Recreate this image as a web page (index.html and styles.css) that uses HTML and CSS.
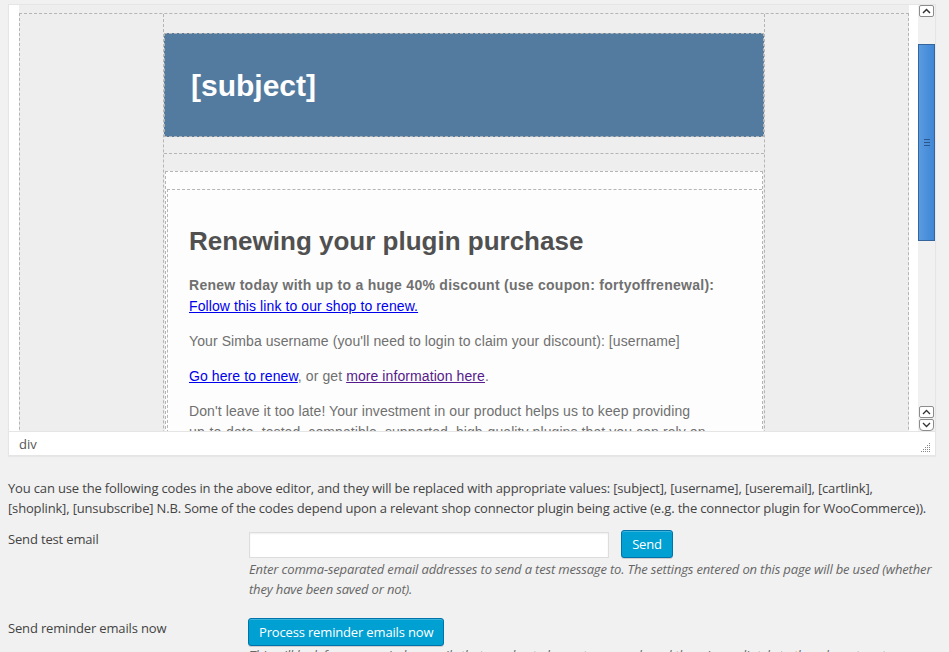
FILE: index.html
```html
<!DOCTYPE html>
<html>
<head>
<meta charset="utf-8">
<link rel="stylesheet" href="styles.css">
</head>
<body>
<div class="editor">
  <div class="edit-area">
    <div class="doc">
      <div class="canvas">
        <div class="outer-table">
          <div class="center-col">
            <div class="header-wrap">
              <div class="header">[subject]</div>
            </div>
            <div class="content-box">
              <div class="content-inner">
                <h1 class="title">Renewing your plugin purchase</h1>
                <p class="para"><strong class="strong">Renew today with up to a huge 40% discount (use coupon: fortyoffrenewal):</strong><br><a class="link" href="#a">Follow this link to our shop to renew.</a></p>
                <p class="para">Your Simba username (you'll need to login to claim your discount): [username]</p>
                <p class="para"><a class="link" href="#b">Go here to renew</a>, or get <a class="link visited" href="#c">more information here</a>.</p>
                <p class="para">Don't leave it too late! Your investment in our product helps us to keep providing <span class="nowrap">up-to-date,</span> tested, compatible, supported, <span class="nowrap">high-quality</span> plugins that you can rely on.</p>
              </div>
            </div>
          </div>
        </div>
      </div>
    </div>
    <div class="scrollbar">
      <div class="sb-btn"><svg width="9" height="6" viewBox="0 0 9 6"><path d="M1 5 L4.5 1.5 L8 5" fill="none" stroke="#333" stroke-width="1.5"/></svg></div>
      <div class="sb-track-top"></div>
      <div class="sb-thumb"><span class="grip"></span></div>
      <div class="sb-track"></div>
      <div class="sb-btn"><svg width="9" height="6" viewBox="0 0 9 6"><path d="M1 5 L4.5 1.5 L8 5" fill="none" stroke="#333" stroke-width="1.3"/></svg></div>
      <div class="sb-btn sb-btn-last"><svg width="9" height="6" viewBox="0 0 9 6"><path d="M1 1 L4.5 4.5 L8 1" fill="none" stroke="#333" stroke-width="1.3"/></svg></div>
    </div>
  </div>
  <div class="statusbar">
    <span class="path">div</span>
    <svg class="resize" width="10" height="10" viewBox="0 0 10 10">
      <g fill="#888">
        <rect x="8" y="0" width="1" height="1"/>
        <rect x="6" y="2" width="1" height="1"/><rect x="8" y="2" width="1" height="1"/>
        <rect x="4" y="4" width="1" height="1"/><rect x="6" y="4" width="1" height="1"/><rect x="8" y="4" width="1" height="1"/>
        <rect x="2" y="6" width="1" height="1"/><rect x="4" y="6" width="1" height="1"/><rect x="6" y="6" width="1" height="1"/><rect x="8" y="6" width="1" height="1"/>
        <rect x="0" y="8" width="1" height="1"/><rect x="2" y="8" width="1" height="1"/><rect x="4" y="8" width="1" height="1"/><rect x="6" y="8" width="1" height="1"/><rect x="8" y="8" width="1" height="1"/>
      </g>
    </svg>
  </div>
</div>

<p class="codes">You can use the following codes in the above editor, and they will be replaced with appropriate values: [subject], [username], [useremail], [cartlink], [shoplink], [unsubscribe] N.B. Some of the codes depend upon a relevant shop connector plugin being active (e.g. the connector plugin for WooCommerce)).</p>

<div class="form-table">
  <div class="row">
    <div class="label">Send test email</div>
    <div class="field">
      <div class="inline">
        <input class="text-input" type="text">
        <button class="btn send">Send</button>
      </div>
      <p class="description">Enter comma-separated email addresses to send a test message to. The settings entered on this page will be used (whether they have been saved or not).</p>
    </div>
  </div>
  <div class="row">
    <div class="label">Send reminder emails now</div>
    <div class="field">
      <button class="btn process">Process reminder emails now</button>
      <p class="description desc-last">This will look for any reminder emails that are due to be sent now, and send them immediately to the relevant customers.</p>
    </div>
  </div>
</div>
</body>
</html>
```

FILE: styles.css
```css
html, body {
  margin: 0;
  padding: 0;
}
body {
  background: #f1f1f1;
  font-family: "Open Sans", "Liberation Sans", sans-serif;
  font-size: 13px;
  letter-spacing: -0.16px;
  color: #444;
  overflow: hidden;
  height: 652px;
}

/* Editor */
.editor {
  margin: 4px 0 0 8px;
  width: 926px;
  border: 1px solid #e5e5e5;
  background: #fff;
  box-shadow: 0 1px 1px rgba(0,0,0,0.04);
  letter-spacing: 0;
}
.edit-area {
  display: flex;
  height: 426px;
}
.doc {
  flex: 1;
  overflow: hidden;
  background: #fff;
  padding: 0 9px 0 10px;
}
.canvas {
  background: #eee;
  height: 100%;
  padding-top: 8px;
  box-sizing: border-box;
  overflow: hidden;
}
.outer-table {
  border: 1px dashed #b5b5b5;
  border-bottom: none;
  display: flex;
  justify-content: center;
  height: 600px;
}
.center-col {
  width: 600px;
  border-left: 1px dashed #b5b5b5;
  border-right: 1px dashed #b5b5b5;
}
.header-wrap {
  padding: 19px 0 16px;
  border-bottom: 1px dashed #b5b5b5;
}
.header {
  background: #537b9f;
  border: 1px dashed #b5b5b5;
  height: 101px;
  line-height: 102px;
  padding: 1px 26px 0;
  color: #fff;
  font-family: "Liberation Sans", Arial, sans-serif;
  font-weight: bold;
  font-size: 30px;
}
.content-box {
  margin: 17px 1px 0;
  border: 1px dashed #b5b5b5;
  border-bottom: none;
  background: #fdfdfd;
  padding-top: 17px;
  height: 500px;
}
.content-inner {
  border-top: 1px dashed #b5b5b5;
  border-left: 1px dashed #b5b5b5;
  margin-left: 1px;
  padding: 36px 20px 0 21px;
  font-family: "Liberation Sans", Arial, sans-serif;
  color: #707070;
  font-size: 14px;
  line-height: 21px;
  letter-spacing: 0.09px;
}
.title {
  margin: 0 0 19px;
  font-size: 26px;
  line-height: 30px;
  color: #505050;
  font-weight: bold;
  letter-spacing: 0;
}
.strong {
  letter-spacing: 0.27px;
}
.nowrap {
  white-space: nowrap;
}
.para {
  margin: 0 0 14px;
}
.link {
  color: #0000ee;
  text-decoration: underline;
}
.link.visited {
  color: #551a8b;
}

/* Scrollbar */
.scrollbar {
  width: 17px;
  background: #f1f1f1;
  display: flex;
  flex-direction: column;
}
.sb-btn {
  height: 10px;
  margin: 0 1px 1px 1px;
  border: 1px solid #8c8c8c;
  border-radius: 2px;
  background: #fff;
  display: flex;
  align-items: center;
  justify-content: center;
}
.sb-btn-last {
  margin-bottom: 0;
  border-radius: 2px 2px 4px 4px;
}
.sb-track-top {
  height: 26px;
}
.sb-thumb {
  height: 195px;
  background: linear-gradient(to right, #5a9be0, #3f86d6);
  border: 1px solid #36659c;
  display: flex;
  align-items: center;
  justify-content: center;
}
.grip {
  width: 6px;
  height: 5px;
  border-top: 1px solid #2c5788;
  border-bottom: 1px solid #2c5788;
  position: relative;
}
.grip::after {
  content: "";
  position: absolute;
  left: 0;
  right: 0;
  top: 2px;
  border-top: 1px solid #2c5788;
}
.sb-track {
  flex: 1;
}

/* Status bar */
.statusbar {
  height: 23px;
  border-top: 1px solid #e5e5e5;
  display: flex;
  align-items: center;
  justify-content: space-between;
  padding: 0 4px 0 10px;
}
.path {
  color: #555;
  font-size: 13px;
}
.resize {
  margin-top: 8px;
}

/* Below editor */
.codes {
  margin: 23px 13px 0 8px;
  line-height: 19.5px;
}
.form-table {
  margin: 12px 8px 0;
}
.row {
  display: flex;
  margin-bottom: 20px;
}
.label {
  width: 240px;
  flex: none;
  line-height: 19.5px;
}
.field {
  flex: 1;
}
.inline {
  display: flex;
  align-items: center;
  gap: 12px;
}
.text-input {
  width: 360px;
  height: 26px;
  box-sizing: border-box;
  border: 1px solid #ddd;
  box-shadow: inset 0 1px 2px rgba(0,0,0,0.07);
  background: #fff;
  margin: 1px 0 0 1px;
  padding: 0;
}
.btn {
  font-family: "Open Sans", "Liberation Sans", sans-serif;
  font-size: 13px;
  letter-spacing: -0.16px;
  height: 28px;
  line-height: 26px;
  padding: 0 10px 1px;
  background: #00a0d2;
  border: 1px solid #0073aa;
  border-radius: 3px;
  color: #fff;
  box-shadow: inset 0 1px 0 rgba(120,200,230,0.5), 0 1px 0 rgba(0,0,0,0.15);
  box-sizing: border-box;
}
.send {
  width: 52px;
  padding: 0;
}
.process {
  margin-top: -1px;
}
.description {
  margin: 2px 0 0 1px;
  font-style: italic;
  color: #666;
  line-height: 19.5px;
}
.desc-last {
  margin-top: 0;
}
```
